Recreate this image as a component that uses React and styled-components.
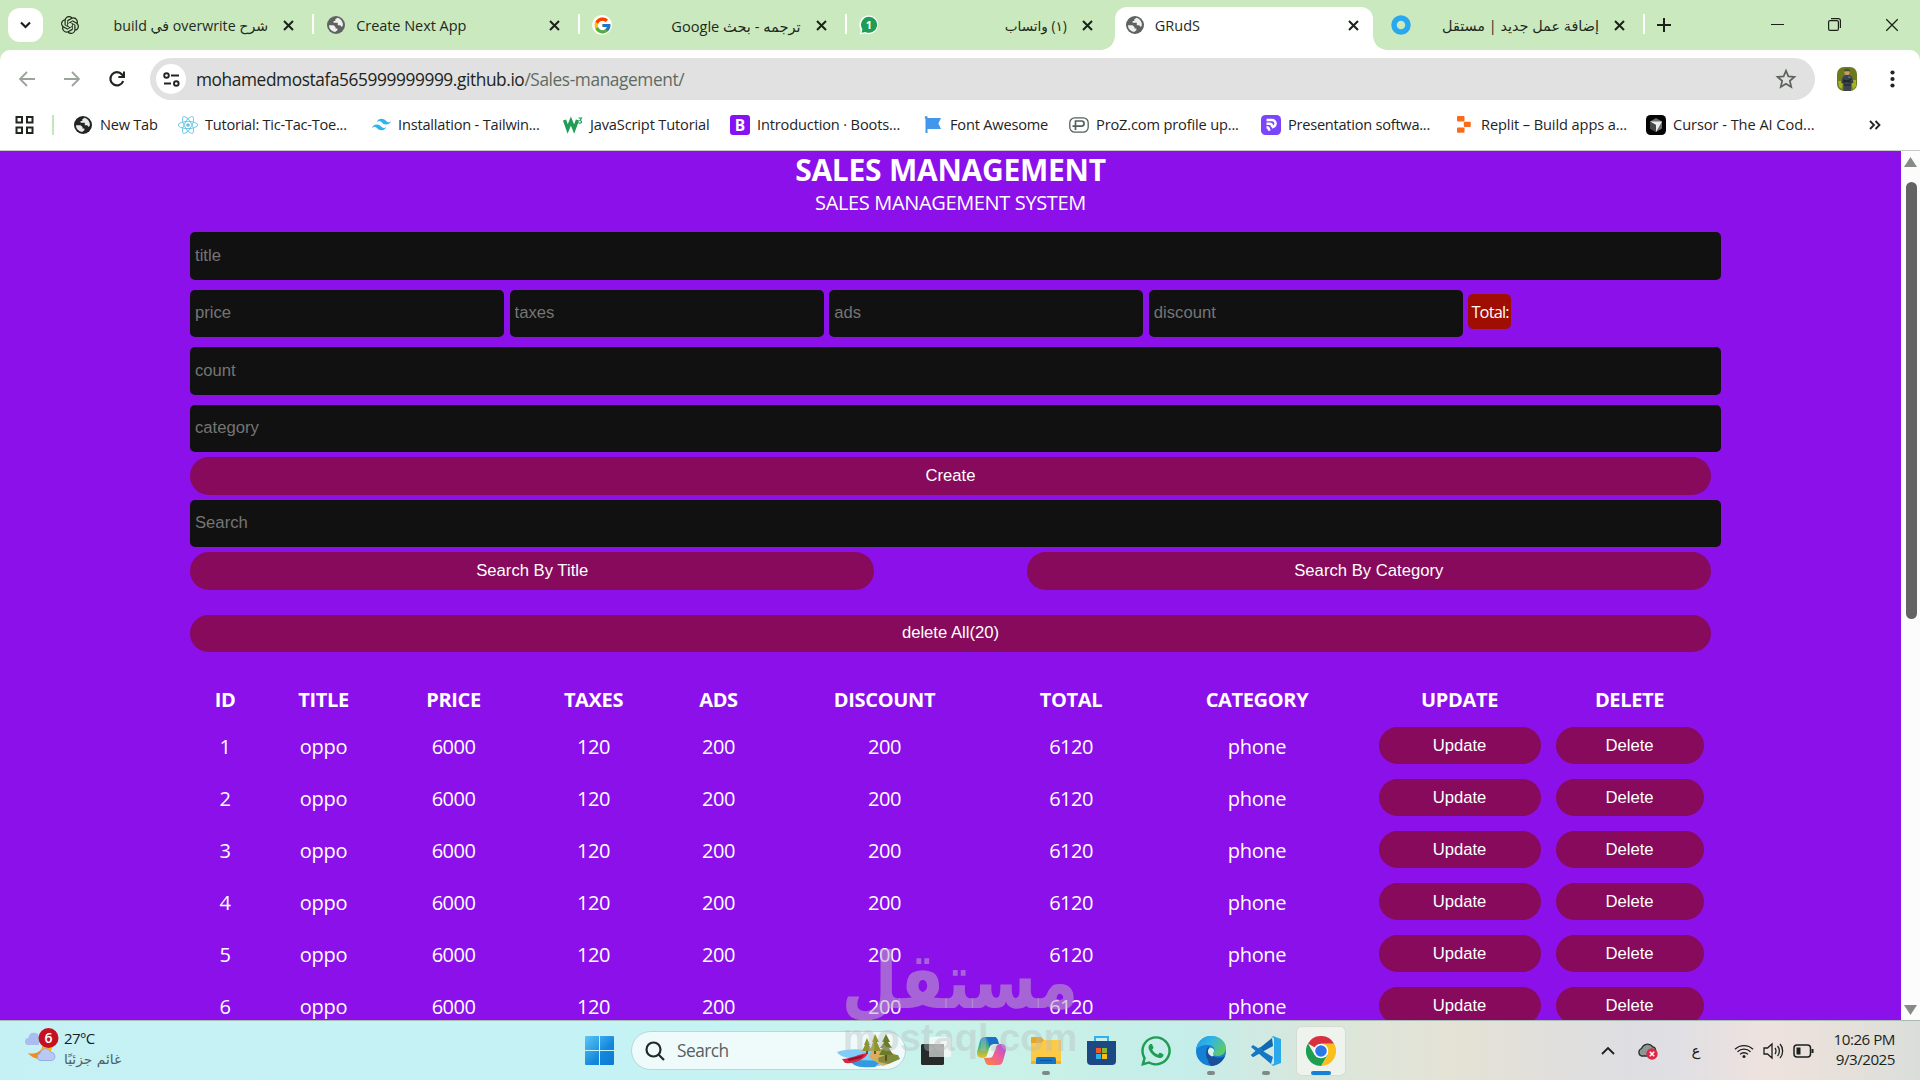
import React, { useState } from 'react';
import styled, { createGlobalStyle } from 'styled-components';
import { FcGoogle } from 'react-icons/fc';
import { FaReact, FaWhatsapp } from 'react-icons/fa';
import { SiTailwindcss, SiOpenai } from 'react-icons/si';

const GlobalStyle = createGlobalStyle`
    * {
        box-sizing: border-box;
    }

    body {
        margin: 0;
        overflow: hidden;
        font-family: "Open Sans", "Noto Sans", "DejaVu Sans", sans-serif;
    }

    svg {
        display: block;
        flex: none;
    }
`

const Screen = styled.div`
    position: relative;
    display: flex;
    flex-direction: column;
    width: 1920px;
    height: 1080px;
    overflow: hidden;
    background: #fff;
`

/* ---------- browser: tabs ---------- */

const TabStrip = styled.div`
    display: flex;
    align-items: flex-end;
    flex: none;
    height: 50px;
    background: #cae9bf;
`

const TabSearch = styled.div`
    display: flex;
    align-items: center;
    justify-content: center;
    width: 35px;
    height: 34px;
    margin: 0 3px 8px 8px;
    border-radius: 12px;
    background: #fff;
`

const Tab = styled.div`
    position: relative;
    display: flex;
    align-items: center;
    width: 266.2px;
    height: 43px;
    padding: 0 18px 7px 14px;
    color: #1f2a1c;

    &::after {
        content: '';
        position: absolute;
        right: -2px;
        top: 7px;
        width: 2px;
        height: 20px;
        background: ${props => props.$divider ? '#fff' : 'transparent'};
    }
`

const ActiveTab = styled(Tab)`
    width: 258px;
    margin: 0 4px;
    padding: 0 14px 7px 10px;
    border-radius: 12px 12px 0 0;
    background: #fff;

    &::before {
        content: '';
        position: absolute;
        left: -14px;
        right: -14px;
        bottom: 0;
        height: 14px;
        background:
            radial-gradient(circle at 0 0, transparent 13.5px, #fff 14px) left / 14px 14px no-repeat,
            radial-gradient(circle at 100% 0, transparent 13.5px, #fff 14px) right / 14px 14px no-repeat;
    }
`

const Favicon = styled.span`
    display: flex;
    align-items: center;
    justify-content: center;
    flex: none;
    width: 20px;
    height: 20px;
`

const TabTitle = styled.span`
    flex: 1;
    margin: 0 15px 0 10px;
    padding-top: 1px;
    font-size: ${props => props.$size || 14.5}px;
    letter-spacing: ${props => props.$spacing || 0}px;
    line-height: 20px;
    white-space: nowrap;
    direction: ${props => props.$rtl ? 'rtl' : 'ltr'};
`

const NewTab = styled.div`
    display: flex;
    align-items: center;
    justify-content: center;
    width: 42px;
    height: 50px;
    padding-bottom: 1px;
`

const WindowButtons = styled.div`
    display: flex;
    align-items: center;
    margin-left: auto;
    height: 50px;
    padding-bottom: 1px;

    & > * {
        display: flex;
        justify-content: center;
        width: 57px;
    }
`

/* ---------- browser: toolbar and bookmarks ---------- */

const Chrome = styled.div`
    flex: none;
    height: 100px;
    background: #cae9bf;
`

const ChromeInner = styled.div`
    height: 100px;
    border-radius: 10px 10px 0 0;
    background: #fff;
`

const Toolbar = styled.div`
    display: flex;
    align-items: center;
    height: 58px;
    padding-left: 18px;
`

const NavIcon = styled.span`
    display: flex;
    width: 45px;
`

const AddressBar = styled.div`
    display: flex;
    align-items: center;
    width: 1665px;
    height: 42px;
    margin-left: -3px;
    padding: 0 18px 0 6px;
    border-radius: 21px;
    background: #e1e1e1;
`

const SiteInfo = styled.span`
    display: flex;
    align-items: center;
    justify-content: center;
    width: 30px;
    height: 30px;
    border-radius: 50%;
    background: #fff;
`

const Url = styled.span`
    flex: 1;
    margin-left: 10px;
    font-size: 17.3px;
    letter-spacing: -0.4px;
    color: #202420;

    & > span {
        color: #5f6b60;
    }
`

const Avatar = styled.span`
    margin-left: 22px;
`

const MenuDots = styled.span`
    margin-left: 33px;
`

const Bookmarks = styled.div`
    display: flex;
    align-items: center;
    height: 33px;
    padding-left: 15px;
`

const BookmarkDivider = styled.div`
    width: 2px;
    height: 20px;
    margin: 0 19px 0 18px;
    background: #c4e6bb;
`

const Bookmark = styled.div`
    display: flex;
    align-items: center;
    flex: none;
    width: ${props => props.$width}px;
    font-size: 14.6px;
    letter-spacing: ${props => props.$spacing || -0.25}px;
    white-space: nowrap;
    color: #1f241f;

    & > span:first-child {
        margin-right: 7px;
    }

    & > span:last-child {
        padding-bottom: 2px;
    }
`

/* ---------- sales page ---------- */

const Viewport = styled.div`
    display: flex;
    flex: none;
    height: 870px;
    border-top: 1px solid #c8ccc8;
    overflow: hidden;
`

const Page = styled.main`
    width: 1901px;
    height: 870px;
    overflow: hidden;
    background: #8c10e9;
    color: #fff;
`

const Heading = styled.header`
    height: 81px;
    text-align: center;
    text-transform: uppercase;

    h1 {
        margin: 0;
        font-size: 30px;
        line-height: 38px;
        letter-spacing: -0.25px;
    }

    p {
        margin: 0;
        font-size: 20px;
        line-height: 28px;
        letter-spacing: -0.35px;
    }
`

const Content = styled.div`
    width: 1521px;
    margin: 0 auto;
`

const Field = styled.input`
    display: block;
    width: ${props => props.$small ? 314 : 1531}px;
    height: ${props => props.$height || 48}px;
    margin: 0 0 ${props => props.$after || 0}px;
    padding: 0 5px ${props => props.$height ? 2 : 0}px;
    border: none;
    border-radius: 5px;
    outline: none;
    background: #111;
    color: #fff;
    font-family: "Liberation Sans", Arial, sans-serif;
    font-size: 16.67px;

    &::placeholder {
        color: #757575;
    }
`

const PriceRow = styled.div`
    display: flex;
    align-items: center;
    gap: 5.6px;
    height: 47px;
    margin-bottom: 10px;
`

const Total = styled.span`
    width: 43px;
    height: 35px;
    margin-top: -4px;
    padding-left: 3px;
    border-radius: 5px;
    background: #a00d02;
    font-size: 16.4px;
    line-height: 36px;
    letter-spacing: -0.8px;
`

const Button = styled.button`
    display: block;
    width: ${props => props.$width || '100%'};
    height: ${props => props.$height || 38}px;
    margin: 0 auto ${props => props.$after || 0}px;
    padding: 0 0 1px;
    border: none;
    border-radius: 20px;
    background: #870a5c;
    color: #fff;
    font-family: "Liberation Sans", Arial, sans-serif;
    font-size: 16.67px;

    &:hover {
        background: #6a0748;
    }
`

const SearchRow = styled.div`
    display: flex;
    justify-content: space-between;
    margin-bottom: 25px;

    ${Button} {
        margin: 0;
    }
`

const Table = styled.table`
    width: 1521px;
    margin-top: 27px;
    table-layout: fixed;
    border-collapse: collapse;
    text-align: center;

    th {
        height: 42px;
        padding: 0 0 2px;
        font-size: 20px;
        letter-spacing: -0.35px;
        text-transform: uppercase;
    }

    td {
        height: 52px;
        padding: 0 7.5px 2px;
        font-size: 20px;
        letter-spacing: -0.5px;
    }

    td:nth-child(2), td:nth-child(8) {
        letter-spacing: -0.3px;
    }

    td:nth-child(n + 9) {
        padding-bottom: 4px;
    }

    ${Button} {
        padding: 1px 0 0;
    }
`

const Scrollbar = styled.div`
    display: flex;
    flex-direction: column;
    align-items: center;
    width: 19px;
    height: 869px;
    padding: 6px 0 5px;
    background: #fcfcfc;
`

const Thumb = styled.div`
    width: 11px;
    height: 437px;
    margin: 15px 0 auto 1px;
    border-radius: 6px;
    background: #636363;
`

/* ---------- taskbar ---------- */

const Taskbar = styled.footer`
    display: flex;
    flex: none;
    height: 60px;
    border-top: 1px solid #a9b9b3;
    background: linear-gradient(90deg, #c5f1f5 0%, #c5f3f4 35%, #c9f1e7 54%, #c5edea 62%, #dbe6da 69%, #e4e2d5 76%, #dedde2 85%, #dfdfe4 87%, #eee2de 92%, #e6e0da 96%, #dadedb 100%);
`

const Weather = styled.div`
    display: flex;
    width: 585px;
    padding: 6px 0 0 25px;
`

const WeatherText = styled.div`
    margin-left: 4px;
    font-size: 15px;
    line-height: 22px;
    color: #14201f;

    p {
        margin: 0;
        height: 21px;
        letter-spacing: -0.6px;
    }

    p:last-child {
        font-family: "DejaVu Sans", sans-serif;
        font-size: 13.8px;
        letter-spacing: 0;
        color: #516260;
    }
`

const Apps = styled.div`
    display: flex;
    align-items: center;
    height: 59px;
`

const SearchBox = styled.div`
    display: flex;
    align-items: center;
    width: 275px;
    height: 39px;
    margin: 0 6px 0 17px;
    padding: 0 5px 0 13px;
    border: 1px solid #b5d8d8;
    border-radius: 20px;
    background: #effbfb;
    font-size: 17.3px;
    color: #56605f;

    & > span {
        flex: 1;
        margin-left: 12px;
        letter-spacing: -0.5px;
    }
`

const App_ = styled.div`
    position: relative;
    display: flex;
    align-items: center;
    justify-content: center;
    width: 48px;
    height: 48px;
    margin-right: 7px;
    border-radius: 5px;
    background: ${props => props.$active ? '#eef3ee' : 'transparent'};
    box-shadow: ${props => props.$active ? '0 0 0 1px #d5ddd3' : 'none'};

    &::after {
        content: '';
        position: absolute;
        bottom: 0;
        left: 50%;
        width: ${props => props.$active ? 20 : 8}px;
        height: 4px;
        border-radius: 2px;
        transform: translateX(-50%);
        background: ${props => props.$active ? '#1480d8' : props.$running ? '#7f8a87' : 'transparent'};
    }
`

const Tray = styled.div`
    display: flex;
    align-items: center;
    height: 59px;
    margin-left: auto;
    padding-right: 25px;
    color: #1b1f1e;
`

const Language = styled.span`
    width: 16px;
    margin: 0 30px 0 29px;
    font-family: "DejaVu Sans", sans-serif;
    font-size: 15px;
    text-align: center;
`

const Clock = styled.div`
    width: 80px;
    padding-bottom: 3px;
    font-size: 15.2px;
    line-height: 20px;
    letter-spacing: -0.5px;
    text-align: right;
    white-space: nowrap;
`

const Watermark = styled.div`
    position: absolute;
    left: 840px;
    top: 930px;
    width: 240px;
    pointer-events: none;

    p {
        display: flex;
        justify-content: center;
        margin: 0;
        white-space: nowrap;
    }
`

const WatermarkArabic = styled.p`
    height: 84px;
    font-family: "DejaVu Sans", sans-serif;
    font-size: 78px;
    font-weight: bold;
    line-height: 102px;
    color: rgba(190, 170, 200, .55);
    transform: scaleX(.83);
`

const WatermarkLatin = styled.p`
    font-family: "Liberation Sans", Arial, sans-serif;
    font-size: 38px;
    font-weight: bold;
    line-height: 48px;
    color: rgba(185, 190, 190, .42);
`

/* ---------- icons ---------- */

const Globe = ({ color = '#5f6360' }) => (
    <svg width="18" height="18" viewBox="0 0 18 18">
        <circle cx="9" cy="9" r="9" fill={color} />
        <path d="M10.5 1.8 8.3 3.2v1.9H6.6v1.7h4.2v2.4h2.4l1.5 1.9 1.2-1.6a7.2 7.2 0 0 0-5.4-7.7Z" fill="#fff" opacity=".9" />
        <path d="M1.9 9.2h4.6l2 1.9v1.5h1.9v1.6l-2.3 1.9A7.2 7.2 0 0 1 1.9 9.2Z" fill="#fff" opacity=".9" />
    </svg>
)

const Cross = ({ size = 11, width = 2 }) => (
    <svg width={size} height={size} viewBox="0 0 11 11" stroke="#1b221a" strokeWidth={width} fill="none">
        <path d="m1 1 9 9M10 1l-9 9" />
    </svg>
)

const WhatsBadge = () => (
    <svg width="20" height="20" viewBox="0 0 20 20">
        <path d="M10 .5a9.3 9.3 0 1 1-4 17.8L.8 19.5l1-4.6A9.4 9.4 0 0 1 10 .5Z" fill="#fff" />
        <path d="M10 1.8a8 8 0 1 1-3.6 15.1l-3.8.9.8-3.6A8 8 0 0 1 10 1.8Z" fill="#1f9d55" />
        <text x="10" y="14" textAnchor="middle" fontSize="11" fontWeight="bold" fill="#fff" fontFamily="Open Sans">1</text>
    </svg>
)

const Ring = () => (
    <svg width="20" height="20" viewBox="0 0 20 20">
        <circle cx="10" cy="10" r="7" fill="none" stroke="#2aa8ef" strokeWidth="5.5" />
    </svg>
)

const W3 = () => (
    <svg width="20" height="18" viewBox="0 0 20 18" fill="none" stroke="#1f9d55" strokeWidth="3.4">
        <path d="m1.5 4 3.2 9 3.2-8 3.2 8L14.5 4" />
        <path d="M15.5 2h3l-1.5 2.4c2 .1 2 3-.4 2.8-.6 0-1-.3-1.2-.7" strokeWidth="1.2" />
    </svg>
)

const Bootstrap = () => (
    <svg width="20" height="20" viewBox="0 0 20 20">
        <rect width="20" height="20" rx="3" fill="#8511f5" />
        <text x="10" y="15.5" textAnchor="middle" fontSize="15.5" fontWeight="bold" fill="#fff" fontFamily="Open Sans">B</text>
    </svg>
)

const Flag = () => (
    <svg width="18" height="17" viewBox="0 0 18 17" fill="#4397ea">
        <path d="M2 0a1.5 1.5 0 0 1 1.4 2H17l-2.600 5.500L17 13H3.500v4h-2V2.800A1.500 1.500 0 0 1 2 0Z" />
    </svg>
)

const Proz = () => (
    <svg width="20" height="16" viewBox="0 0 20 16" fill="none" stroke="#51605c" strokeWidth="1.3">
        <rect x=".8" y=".8" width="18.4" height="14.4" rx="5" />
        <path d="M6.5 13V4h6a2.4 2.4 0 0 1 0 5.2H3.5" strokeWidth="1.7" />
    </svg>
)

const Presentation = () => (
    <svg width="20" height="20" viewBox="0 0 20 20">
        <rect width="20" height="20" rx="4.5" fill="#7a45fb" />
        <path d="M5.5 5h5.5a3.6 3.6 0 0 1 0 7.2M5.5 8.7h3c2 0 2.8 1 2.8 3.5M5.5 12.2c2 0 2.7 1.2 2.7 3.6" fill="none" stroke="#fff" strokeWidth="2.5" />
    </svg>
)

const Replit = () => (
    <svg width="14" height="17" viewBox="0 0 14 17" fill="#f66c1c">
        <rect x="0" y="0" width="7.5" height="5.4" rx="1" />
        <rect x="6.8" y="5.7" width="7" height="5.4" rx="1" />
        <rect x="0" y="11.4" width="7.5" height="5.4" rx="1" />
    </svg>
)

const Cursor = () => (
    <svg width="20" height="20" viewBox="0 0 20 20">
        <rect width="20" height="20" rx="4.5" fill="#050505" />
        <path d="m10 3 6 3.5v7L10 17l-6-3.5v-7Z" fill="#6a6f6c" />
        <path d="M4 6.5h12L10 17v-7Z" fill="#eef0ee" />
        <path d="m4 6.5 6 3.5v7l-6-3.5Z" fill="#454947" />
    </svg>
)

const Person = () => (
    <svg width="20" height="24" viewBox="0 0 20 24">
        <rect width="20" height="24" rx="7" fill="#6d7a1c" />
        <path d="M1 14h5l-1 8-3-2Z" fill="#a5b324" />
        <path d="M14 13h5v6l-3 4Z" fill="#a5b324" />
        <path d="M6 9.5 8.5 8H12l3 1.5 1.500 6-2.500 1.500V24H6.500v-7L4 15.500Z" fill="#3d444e" />
        <path d="m6 13 8 2.5M14 12.5l-8 3M7 18h7" stroke="#1c2026" strokeWidth="1.1" />
        <path d="M11 9.5h2l.5 1.5h-2Z" fill="#4a7cc0" />
        <circle cx="10" cy="5.5" r="2.6" fill="#cf9a70" />
        <path d="M7 4.200C7 1 13 1 13 4.200Z" fill="#4a4c3c" />
    </svg>
)

const WeatherIcon = () => (
    <svg width="35" height="38" viewBox="0 0 35 38">
        <path d="M3.5 18a3.5 3.5 0 0 1 0-7 5.5 5.5 0 0 1 10.5-2v9Z" fill="#a9bdee" />
        <path d="M26 19c0 12-13 18-23.5 7 7 2 14-1 15-7Z" fill="#f58a1f" />
        <path d="M27 16c1 8-3 12-8 13l-3-6 5-6Z" fill="#fbb81d" />
        <path d="M15 33.5a3.6 3.6 0 0 1 0-7 5.5 5.5 0 0 1 10.5-1.5 4.3 4.3 0 0 1 1 8.5Z" fill="#b9c9f2" stroke="#8aa1df" strokeWidth=".8" />
        <circle cx="23.5" cy="11" r="10" fill="#c4101f" />
        <text x="23.5" y="16" textAnchor="middle" fontSize="14" fill="#fff" fontFamily="Open Sans" fontWeight="600">6</text>
    </svg>
)

const WindowsLogo = () => (
    <svg width="29" height="29" viewBox="0 0 29 29">
        <defs>
            <linearGradient id="win" x1="0" y1="0" x2="1" y2="1">
                <stop offset="0" stopColor="#5cc6f3" />
                <stop offset=".6" stopColor="#1487dc" />
                <stop offset="1" stopColor="#0a79d2" />
            </linearGradient>
        </defs>
        <path d="M1 0h13v14H0V1a1 1 0 0 1 1-1ZM15 0h13a1 1 0 0 1 1 1v13H15ZM0 15h14v14H1a1 1 0 0 1-1-1ZM15 15h14v13a1 1 0 0 1-1 1H15Z" fill="url(#win)" />
    </svg>
)

const Lake = () => (
    <svg width="63" height="34" viewBox="0 0 63 34">
        <path d="M0 18c10-4 27-3 35-1l22 6c-2 6-10 9-24 10-14 0-18-3-19-5l8-3C10 25 2 22 0 18Z" fill="#7fcdf8" />
        <path d="M14 28c10-3 20-1 30-1l-6 6c-12 1-20 0-24-5Z" fill="#329be0" />
        <path d="m35 17 12-3 12 7 3 4-8 4-8 3-10-6-4-3Z" fill="#d9ad5c" />
        <path d="m41 24 10-4 10 1 2 4-12 5-9-2Z" fill="#7e8d3c" />
        <path d="M5 25c8 0 17-5 26-6-3 7-15 11-23 10Z" fill="#df2440" />
        <path d="m10 25 17-4-3 3-12 3Z" fill="#8f1430" />
        <path d="m30 4-3 7h1l-3 6h10l-3-6h1ZM38 0l-3 8h1l-3 9h11l-4-9h2Z" fill="#8d9430" />
        <path d="m49 0-4 8h2l-4 6h3l-4 7h14l-4-7h3l-4-6h2Z" fill="#6c7b27" />
        <path d="M30 17v3M38 17v3M49 21v6" stroke="#70401f" strokeWidth="1.8" />
    </svg>
)

const TaskView = () => (
    <svg width="30" height="30" viewBox="0 0 30 30">
        <rect x="0" y="8" width="23" height="21" rx="1.5" fill="#262a29" />
        <rect x="8" y="1" width="22" height="20" rx="1.5" fill="#fafafa" opacity=".8" />
        <rect x="8" y="8" width="15" height="13" fill="#a9adab" />
    </svg>
)

const Copilot = () => (
    <svg width="29" height="28" viewBox="0 0 29 28">
        <defs>
            <linearGradient id="cpA" x1="0" y1="0" x2="0" y2="1">
                <stop offset="0" stopColor="#1682d5" />
                <stop offset=".5" stopColor="#4fb870" />
                <stop offset="1" stopColor="#f5bd22" />
            </linearGradient>
            <linearGradient id="cpB" x1="1" y1="0" x2="0" y2="1">
                <stop offset="0" stopColor="#a34eea" />
                <stop offset=".5" stopColor="#f16091" />
                <stop offset="1" stopColor="#f98a35" />
            </linearGradient>
        </defs>
        <path d="M8 0h9c2.5 0 3.5 2 4 4l1 3h-5c-3 0-4 2-5 5l-2 6c-.7 2-2 3-4 3H5c-4 0-6-3-4.500-8L3 4c1-3 2.500-4 5-4Z" fill="url(#cpA)" />
        <path d="M8 0h9c2.5 0 3.5 2 4 4l1 3h-5c-3 0-4 1.500-5 4C12 5 11 1 8 0Z" fill="#1c6dcc" />
        <path d="M21 28h-9c-2.500 0-3.500-2-4-4l-1-3h5c3 0 4-2 5-5l2-6c.7-2 2-3 4-3h1c4 0 6 3 4.500 8L26 24c-1 3-2.500 4-5 4Z" fill="url(#cpB)" />
        <path d="m13.500 9-4 11h4c1.500 0 2-1.500 3-4l3-8h-3c-1.500 0-2.300 0-3 1Z" fill="#e9f7f2" />
    </svg>
)

const Explorer = () => (
    <svg width="30" height="28" viewBox="0 0 30 28">
        <path d="M1 0h9l3 3h16a1 1 0 0 1 1 1v6H0V1a1 1 0 0 1 1-1Z" fill="#e8a51d" />
        <path d="M0 6h10l3-3h17v24H0Z" fill="#fdca45" />
        <path d="M0 24h30v3H0Z" fill="#f0b22b" />
        <path d="M5 27v-5a2 2 0 0 1 2-2h16a2 2 0 0 1 2 2v5Z" fill="#1474cd" />
        <path d="M9 23.5h12" stroke="#0c569f" strokeWidth="1.3" />
    </svg>
)

const Store = () => (
    <svg width="29" height="29" viewBox="0 0 29 29">
        <path d="M8 7V1h13v6" fill="none" stroke="#32b1ea" strokeWidth="2" />
        <path d="M0 5h29v20a4 4 0 0 1-4 4H4a4 4 0 0 1-4-4Z" fill="#1c4984" />
        <path d="M9 12h5v5H9Z" fill="#f1592a" />
        <path d="M15 12h5v5h-5Z" fill="#8ab82c" />
        <path d="M9 18h5v5H9Z" fill="#2cb0ea" />
        <path d="M15 18h5v5h-5Z" fill="#fbbd1e" />
    </svg>
)

const Edge = () => (
    <svg width="30" height="30" viewBox="0 0 30 30">
        <defs>
            <linearGradient id="edge" x1="0" y1="0" x2="1" y2=".5">
                <stop offset="0" stopColor="#1d9be0" />
                <stop offset=".5" stopColor="#32b5e5" />
                <stop offset="1" stopColor="#5cc96a" />
            </linearGradient>
        </defs>
        <circle cx="15" cy="15" r="15" fill="#1480d6" />
        <path d="M17 20c3 2 8 2 12 0-3 6-8 10-14 10l-3-4Z" fill="#194f9c" />
        <path d="M12 11c-4 5-2 17 8 17 4-1 6-3 8-7-7 3-14 0-14-6 0-2 0-4-2-4Z" fill="#194f9c" />
        <path d="M0 14C1 5 8 0 15 0c9 0 15 6 15 12 0 5-4 8-8 8-3 0-5-1-5-2 0-1 1.500-1.500 1.500-4 0-3-3-5-7-5C6 9 1 11 0 14Z" fill="url(#edge)" />
        <path d="M14 11.500c-3 2-3 7 2 9l2-1c-1.500-1-1-1.500-.5-3 1.500-2 .5-4.500-3.500-5Z" fill="#d8f0ec" />
    </svg>
)

const VsCode = () => (
    <svg width="30" height="30" viewBox="0 0 30 30">
        <path d="M2 9 0 11l20 17 2-7Z" fill="#1478c4" />
        <path d="M2 21 0 19 21 2l1 8Z" fill="#0f68b0" />
        <path d="m2 21-2-2 9-8 4 4Z" fill="#1478c4" />
        <path d="M22 0 30 3v24l-8 3-2-2c2 1 3 0 3-1V3c0-1-1-2-3-1Z" fill="#29a8ea" />
    </svg>
)

const ChromeLogo = () => (
    <svg width="30" height="30" viewBox="0 0 30 30">
        <path d="M15 15 2 7.5A15 15 0 0 1 28 7.5Z" fill="#d93040" />
        <path d="M15 7.5h13A15 15 0 0 1 15 30l6.5-11.2Z" fill="#fbbf1d" />
        <path d="M2 7.5A15 15 0 0 0 15 30l6.5-11.3L8.5 18.7Z" fill="#1f9d50" />
        <circle cx="15" cy="15" r="7.3" fill="#fff" />
        <circle cx="15" cy="15" r="5.8" fill="#2c78e8" />
    </svg>
)

const Cloud = () => (
    <svg width="22" height="18" viewBox="0 0 22 18">
        <path d="M4.5 14a4 4 0 0 1 0-7.5C6 2.5 12 0 16 5c2 0 3 2 2.5 4L14 14Z" fill="#8d9794" stroke="#2a302e" strokeWidth="1.3" />
        <circle cx="15" cy="12" r="5.7" fill="#df2548" />
        <path d="m12.8 9.8 4.4 4.4M17.2 9.8l-4.4 4.4" stroke="#fff" strokeWidth="1.5" />
    </svg>
)

const tabs = [
    { title: 'شرح overwrite في build', icon: <SiOpenai size={18} />, rtl: true, size: 14.2, divider: true },
    { title: 'Create Next App', icon: <Globe />, spacing: -0.05, divider: true },
    { title: 'ترجمه - بحث Google', icon: <FcGoogle size={19} />, rtl: true, size: 14.6, divider: true, round: true },
    { title: '(١) واتساب', icon: <WhatsBadge />, rtl: true, size: 13.6 },
    { title: 'GRudS', icon: <Globe />, active: true },
    { title: 'إضافة عمل جديد | مستقل', icon: <Ring />, rtl: true, size: 14.4, divider: true },
]

const GoogleDisc = styled(Favicon)`
    border-radius: 50%;
    background: #fff;
`

const bookmarks = [
    { label: 'New Tab', width: 105, icon: <Globe color="#202422" /> },
    { label: 'Tutorial: Tic-Tac-Toe...', width: 193, icon: <FaReact size={20} color="#62c5e4" /> },
    { label: 'Installation - Tailwin...', width: 192, spacing: -0.2, icon: <SiTailwindcss size={19} color="#31b3ee" /> },
    { label: 'JavaScript Tutorial', width: 167, spacing: -0.15, icon: <W3 /> },
    { label: 'Introduction · Boots...', width: 193, spacing: -0.15, icon: <Bootstrap /> },
    { label: 'Font Awesome', width: 146, spacing: -0.2, icon: <Flag /> },
    { label: 'ProZ.com profile up...', width: 192, spacing: -0.15, icon: <Proz /> },
    { label: 'Presentation softwa...', width: 193, icon: <Presentation /> },
    { label: 'Replit – Build apps a...', width: 192, spacing: -0.1, icon: <Replit /> },
    { label: 'Cursor - The AI Cod...', width: 223, spacing: -0.05, icon: <Cursor /> },
]

const columns = [
    ['id', 70],
    ['title', 127],
    ['price', 133],
    ['taxes', 147],
    ['ads', 103],
    ['discount', 229],
    ['total', 144],
    ['category', 228],
    ['update', 177],
    ['delete', 163],
]

const product = { title: 'oppo', price: 6000, taxes: 120, ads: 200, discount: 200, total: 6120, category: 'phone' };

function Browser() {
    return (
        <>
            <TabStrip>
                <TabSearch>
                    <svg width="11" height="8" viewBox="0 0 11 8" fill="none" stroke="#1b221a" strokeWidth="2.2"><path d="m1 1.5 4.5 4.5L10 1.5" /></svg>
                </TabSearch>
                {tabs.map(tab => {
                    const Holder = tab.active ? ActiveTab : Tab;
                    const Icon = tab.round ? GoogleDisc : Favicon;
                    return (
                        <Holder key={tab.title} $divider={tab.divider}>
                            <Icon>{tab.icon}</Icon>
                            <TabTitle $rtl={tab.rtl} $size={tab.size} $spacing={tab.spacing}>{tab.title}</TabTitle>
                            <Cross />
                        </Holder>
                    )
                })}
                <NewTab>
                    <svg width="14" height="14" viewBox="0 0 14 14" stroke="#1b221a" strokeWidth="2"><path d="M7 0v14M0 7h14" /></svg>
                </NewTab>
                <WindowButtons>
                    <span><svg width="13" height="14" viewBox="0 0 13 14" stroke="#1b221a"><path d="M0 6.5h13" /></svg></span>
                    <span>
                        <svg width="13" height="13" viewBox="0 0 13 13" fill="none" stroke="#1b221a" strokeWidth="1.2">
                            <rect x=".6" y="2.6" width="9.8" height="9.8" rx="1.5" />
                            <path d="M3 .6h7.4a2 2 0 0 1 2 2V10" />
                        </svg>
                    </span>
                    <span><Cross size={14} width={1} /></span>
                </WindowButtons>
            </TabStrip>
            <Chrome>
                <ChromeInner>
                    <Toolbar>
                        <NavIcon><svg width="18" height="16" viewBox="0 0 18 16" fill="none" stroke="#9aa49a" strokeWidth="1.8"><path d="M17 8H2M9 1 2 8l7 7" /></svg></NavIcon>
                        <NavIcon><svg width="18" height="16" viewBox="0 0 18 16" fill="none" stroke="#9aa49a" strokeWidth="1.8"><path d="M1 8h15M9 1l7 7-7 7" /></svg></NavIcon>
                        <NavIcon>
                            <svg width="18" height="18" viewBox="0 0 18 18" fill="none" stroke="#20251f" strokeWidth="2.2">
                                <path d="M15.2 11A6.6 6.6 0 1 1 14 4.5l1.5 1.7" />
                                <path d="M16 1.5v5.6h-5.6" strokeWidth="2" />
                            </svg>
                        </NavIcon>
                        <AddressBar>
                            <SiteInfo>
                                <svg width="17" height="15" viewBox="0 0 17 15" fill="none" stroke="#20251f" strokeWidth="1.9">
                                    <circle cx="3.5" cy="3.5" r="2.3" />
                                    <path d="M8 3.5h8M1 11.5h7" />
                                    <circle cx="13.3" cy="11.5" r="2.3" />
                                </svg>
                            </SiteInfo>
                            <Url>mohamedmostafa565999999999.github.io<span>/Sales-management/</span></Url>
                            <svg width="22" height="22" viewBox="0 0 24 24" fill="none" stroke="#5d625c" strokeWidth="1.9"><path d="m12 3 2.6 6.1 6.6.6-5 4.4 1.5 6.5-5.7-3.5-5.7 3.5 1.5-6.5-5-4.4 6.6-.6Z" /></svg>
                        </AddressBar>
                        <Avatar><Person /></Avatar>
                        <MenuDots>
                            <svg width="5" height="18" viewBox="0 0 5 18" fill="#20251f"><circle cx="2.5" cy="2.5" r="2.1" /><circle cx="2.5" cy="9" r="2.1" /><circle cx="2.5" cy="15.5" r="2.1" /></svg>
                        </MenuDots>
                    </Toolbar>
                    <Bookmarks>
                        <svg width="19" height="18" viewBox="0 0 19 18" fill="none" stroke="#20251f" strokeWidth="2">
                            <path d="M1.5 1H7v5.5H1.5ZM12 1h5.5v5.5H12ZM1.5 11.5H7V17H1.5ZM12 11.5h5.5V17H12Z" />
                        </svg>
                        <BookmarkDivider />
                        {bookmarks.map(item => (
                            <Bookmark key={item.label} $width={item.width} $spacing={item.spacing}>
                                <Favicon>{item.icon}</Favicon>
                                <span>{item.label}</span>
                            </Bookmark>
                        ))}
                        <svg width="12" height="10" viewBox="0 0 12 10" fill="none" stroke="#20251f" strokeWidth="1.8"><path d="m1 1 4 4-4 4M6.5 1l4 4-4 4" /></svg>
                    </Bookmarks>
                </ChromeInner>
            </Chrome>
        </>
    )
}

function SalesPage() {
    const [search, setSearch] = useState('');
    const rows = [1, 2, 3, 4, 5, 6];

    return (
        <Page>
            <Heading>
                <h1>Sales Management</h1>
                <p>Sales Management System</p>
            </Heading>
            <Content>
                <Field placeholder="title" $after={10} />
                <PriceRow>
                    <Field placeholder="price" $small $height={47} />
                    <Field placeholder="taxes" $small $height={47} />
                    <Field placeholder="ads" $small $height={47} />
                    <Field placeholder="discount" $small $height={47} />
                    <Total>Total:</Total>
                </PriceRow>
                <Field placeholder="count" $after={10} />
                <Field placeholder="category" $height={47} $after={5} />
                <Button $after={5}>Create</Button>
                <Field placeholder="Search" $height={47} $after={5} value={search} onChange={(e) => setSearch(e.target.value)} />
                <SearchRow>
                    <Button $width="45%">Search By Title</Button>
                    <Button $width="45%">Search By Category</Button>
                </SearchRow>
                <Button $height={37}>delete All(20)</Button>
                <Table>
                    <colgroup>
                        {columns.map(([name, width]) => <col key={name} width={width} />)}
                    </colgroup>
                    <thead>
                        <tr>{columns.map(([name]) => <th key={name}>{name}</th>)}</tr>
                    </thead>
                    <tbody>
                        {rows.map(id => (
                            <tr key={id}>
                                <td>{id}</td>
                                <td>{product.title}</td>
                                <td>{product.price}</td>
                                <td>{product.taxes}</td>
                                <td>{product.ads}</td>
                                <td>{product.discount}</td>
                                <td>{product.total}</td>
                                <td>{product.category}</td>
                                <td><Button $height={37}>Update</Button></td>
                                <td><Button $height={37}>Delete</Button></td>
                            </tr>
                        ))}
                    </tbody>
                </Table>
            </Content>
        </Page>
    )
}

function WindowsTaskbar() {
    return (
        <Taskbar>
            <Weather>
                <WeatherIcon />
                <WeatherText>
                    <p>27°C</p>
                    <p>غائم جزئيًا</p>
                </WeatherText>
            </Weather>
            <Apps>
                <WindowsLogo />
                <SearchBox>
                    <svg width="20" height="20" viewBox="0 0 20 20" fill="none" stroke="#242827" strokeWidth="2.2"><circle cx="8.5" cy="8.5" r="7" /><path d="m13.5 13.5 5.5 5.5" /></svg>
                    <span>Search</span>
                    <Lake />
                </SearchBox>
                <App_><TaskView /></App_>
                <App_><Copilot /></App_>
                <App_ $running><Explorer /></App_>
                <App_><Store /></App_>
                <App_><FaWhatsapp size={34} color="#1f9d55" /></App_>
                <App_ $running><Edge /></App_>
                <App_ $running><VsCode /></App_>
                <App_ $active><ChromeLogo /></App_>
            </Apps>
            <Tray>
                <svg width="14" height="9" viewBox="0 0 14 9" fill="none" stroke="#1b1f1e" strokeWidth="1.8"><path d="m1 8 6-6 6 6" /></svg>
                <svg width="22" height="9" />
                <Cloud />
                <Language>ع</Language>
                <svg width="20" height="16" viewBox="0 0 20 16" fill="none" stroke="#1b1f1e" strokeWidth="1.3">
                    <path d="M1 6.2a13 13 0 0 1 18 0M3.5 8.8a9.3 9.3 0 0 1 13 0M6 11.4a5.7 5.7 0 0 1 8 0" />
                    <circle cx="10" cy="13.5" r="1.5" fill="#1b1f1e" stroke="none" />
                </svg>
                <svg width="35" height="18" viewBox="-9 0 35 18" fill="none" stroke="#1b1f1e" strokeWidth="1.3">
                    <path d="M9 2v14l-4.5-4H1V6h3.5ZM12 6c1.3 1.5 1.3 4.5 0 6M14.5 4c2.5 2.5 2.5 7.5 0 10M17 2c3.5 3.5 3.5 10.5 0 14" />
                </svg>
                <svg width="26" height="14" viewBox="-4 0 26 14" fill="none" stroke="#1b1f1e" strokeWidth="1.5">
                    <rect x="1" y="1" width="16.5" height="12" rx="3" />
                    <rect x="3.5" y="3.5" width="4" height="7" fill="#1b1f1e" stroke="none" />
                    <path d="M19.5 5v4" strokeWidth="2" />
                </svg>
                <Clock>10:26 PM<br />9/3/2025</Clock>
            </Tray>
        </Taskbar>
    )
}

export default function App() {
    return (
        <Screen>
            <GlobalStyle />
            <Browser />
            <Viewport>
                <SalesPage />
                <Scrollbar>
                    <svg width="13" height="10" viewBox="0 0 13 10" fill="#858c86"><path d="M6.5 0 13 10H0Z" /></svg>
                    <Thumb />
                    <svg width="13" height="10" viewBox="0 0 13 10" fill="#858c86"><path d="M6.5 10 13 0H0Z" /></svg>
                </Scrollbar>
            </Viewport>
            <WindowsTaskbar />
            <Watermark>
                <WatermarkArabic>مستقل</WatermarkArabic>
                <WatermarkLatin>mostaql.com</WatermarkLatin>
            </Watermark>
        </Screen>
    )
}
